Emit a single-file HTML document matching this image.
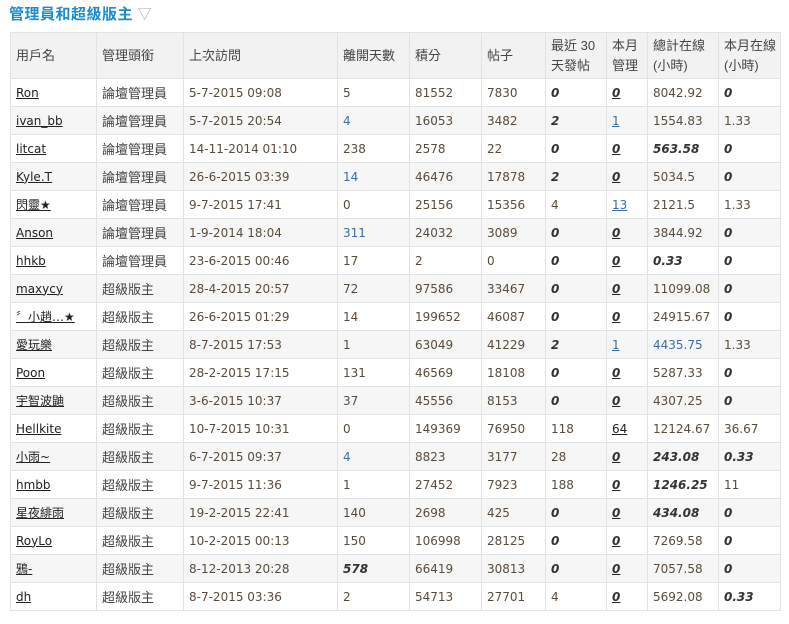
<!DOCTYPE html>
<html><head><meta charset="utf-8"><style>
body{margin:0;background:#fff;font-family:"DejaVu Sans","Noto Sans CJK TC",sans-serif;font-size:12px;color:#333;}
h2{position:absolute;left:9px;top:3px;margin:0;font-size:15px;font-weight:bold;color:#1a8ccf;font-family:"Liberation Sans","Noto Sans CJK TC",sans-serif;letter-spacing:0.5px}
h2 span{color:#aaa;font-weight:normal;font-size:14px}
table{position:absolute;left:10px;top:32px;border-collapse:collapse;width:770px;table-layout:fixed}
td,th{border:1px solid #e2e2e2;padding:0 5px;height:27px;text-align:left;font-weight:normal;white-space:nowrap;color:#5a4c3c}
th{background:#f2f2f2;height:45px;color:#444;line-height:20px;font-family:"Liberation Sans","Noto Sans CJK TC",sans-serif;font-size:13px}
tr:nth-child(odd) td{background:#f6f6f6}
td.t{color:#444;font-family:"Liberation Sans","Noto Sans CJK TC",sans-serif;font-size:13px}
a{color:#222;text-decoration:underline}
b{font-style:italic;color:#333}
.bl{color:#3b6ea5}
.bl a{color:#3b6ea5}
</style></head><body>
<h2>管理員和超級版主 <span>▽</span></h2>
<table>
<colgroup><col style="width:86px"><col style="width:87px"><col style="width:154px"><col style="width:72px"><col style="width:72px"><col style="width:64px"><col style="width:61px"><col style="width:41px"><col style="width:71px"><col style="width:62px"></colgroup>
<tr><th>用戶名</th><th>管理頭銜</th><th>上次訪問</th><th>離開天數</th><th>積分</th><th>帖子</th><th>最近 30<br>天發帖</th><th>本月<br>管理</th><th>總計在線<br>(小時)</th><th>本月在線<br>(小時)</th></tr>
<tr><td><a>Ron</a></td><td class="t">論壇管理員</td><td>5-7-2015 09:08</td><td>5</td><td>81552</td><td>7830</td><td><b>0</b></td><td><a><b>0</b></a></td><td>8042.92</td><td><b>0</b></td></tr>
<tr><td><a>ivan_bb</a></td><td class="t">論壇管理員</td><td>5-7-2015 20:54</td><td class="bl">4</td><td>16053</td><td>3482</td><td><b>2</b></td><td class="bl"><a>1</a></td><td>1554.83</td><td>1.33</td></tr>
<tr><td><a>litcat</a></td><td class="t">論壇管理員</td><td>14-11-2014 01:10</td><td>238</td><td>2578</td><td>22</td><td><b>0</b></td><td><a><b>0</b></a></td><td><b>563.58</b></td><td><b>0</b></td></tr>
<tr><td><a>Kyle.T</a></td><td class="t">論壇管理員</td><td>26-6-2015 03:39</td><td class="bl">14</td><td>46476</td><td>17878</td><td><b>2</b></td><td><a><b>0</b></a></td><td>5034.5</td><td><b>0</b></td></tr>
<tr><td><a>閃靈★</a></td><td class="t">論壇管理員</td><td>9-7-2015 17:41</td><td>0</td><td>25156</td><td>15356</td><td>4</td><td class="bl"><a>13</a></td><td>2121.5</td><td>1.33</td></tr>
<tr><td><a>Anson</a></td><td class="t">論壇管理員</td><td>1-9-2014 18:04</td><td class="bl">311</td><td>24032</td><td>3089</td><td><b>0</b></td><td><a><b>0</b></a></td><td>3844.92</td><td><b>0</b></td></tr>
<tr><td><a>hhkb</a></td><td class="t">論壇管理員</td><td>23-6-2015 00:46</td><td>17</td><td>2</td><td>0</td><td><b>0</b></td><td><a><b>0</b></a></td><td><b>0.33</b></td><td><b>0</b></td></tr>
<tr><td><a>maxycy</a></td><td class="t">超級版主</td><td>28-4-2015 20:57</td><td>72</td><td>97586</td><td>33467</td><td><b>0</b></td><td><a><b>0</b></a></td><td>11099.08</td><td><b>0</b></td></tr>
<tr><td><a>〞小趙…★</a></td><td class="t">超級版主</td><td>26-6-2015 01:29</td><td>14</td><td>199652</td><td>46087</td><td><b>0</b></td><td><a><b>0</b></a></td><td>24915.67</td><td><b>0</b></td></tr>
<tr><td><a>愛玩樂</a></td><td class="t">超級版主</td><td>8-7-2015 17:53</td><td>1</td><td>63049</td><td>41229</td><td><b>2</b></td><td class="bl"><a>1</a></td><td class="bl">4435.75</td><td>1.33</td></tr>
<tr><td><a>Poon</a></td><td class="t">超級版主</td><td>28-2-2015 17:15</td><td>131</td><td>46569</td><td>18108</td><td><b>0</b></td><td><a><b>0</b></a></td><td>5287.33</td><td><b>0</b></td></tr>
<tr><td><a>宇智波鼬</a></td><td class="t">超級版主</td><td>3-6-2015 10:37</td><td>37</td><td>45556</td><td>8153</td><td><b>0</b></td><td><a><b>0</b></a></td><td>4307.25</td><td><b>0</b></td></tr>
<tr><td><a>Hellkite</a></td><td class="t">超級版主</td><td>10-7-2015 10:31</td><td>0</td><td>149369</td><td>76950</td><td>118</td><td><a>64</a></td><td>12124.67</td><td>36.67</td></tr>
<tr><td><a>小雨~</a></td><td class="t">超級版主</td><td>6-7-2015 09:37</td><td class="bl">4</td><td>8823</td><td>3177</td><td>28</td><td><a><b>0</b></a></td><td><b>243.08</b></td><td><b>0.33</b></td></tr>
<tr><td><a>hmbb</a></td><td class="t">超級版主</td><td>9-7-2015 11:36</td><td>1</td><td>27452</td><td>7923</td><td>188</td><td><a><b>0</b></a></td><td><b>1246.25</b></td><td>11</td></tr>
<tr><td><a>星夜緋雨</a></td><td class="t">超級版主</td><td>19-2-2015 22:41</td><td>140</td><td>2698</td><td>425</td><td><b>0</b></td><td><a><b>0</b></a></td><td><b>434.08</b></td><td><b>0</b></td></tr>
<tr><td><a>RoyLo</a></td><td class="t">超級版主</td><td>10-2-2015 00:13</td><td>150</td><td>106998</td><td>28125</td><td><b>0</b></td><td><a><b>0</b></a></td><td>7269.58</td><td><b>0</b></td></tr>
<tr><td><a>鴉-</a></td><td class="t">超級版主</td><td>8-12-2013 20:28</td><td><b>578</b></td><td>66419</td><td>30813</td><td><b>0</b></td><td><a><b>0</b></a></td><td>7057.58</td><td><b>0</b></td></tr>
<tr><td><a>dh</a></td><td class="t">超級版主</td><td>8-7-2015 03:36</td><td>2</td><td>54713</td><td>27701</td><td>4</td><td><a><b>0</b></a></td><td>5692.08</td><td><b>0.33</b></td></tr>
</table>
</body></html>
